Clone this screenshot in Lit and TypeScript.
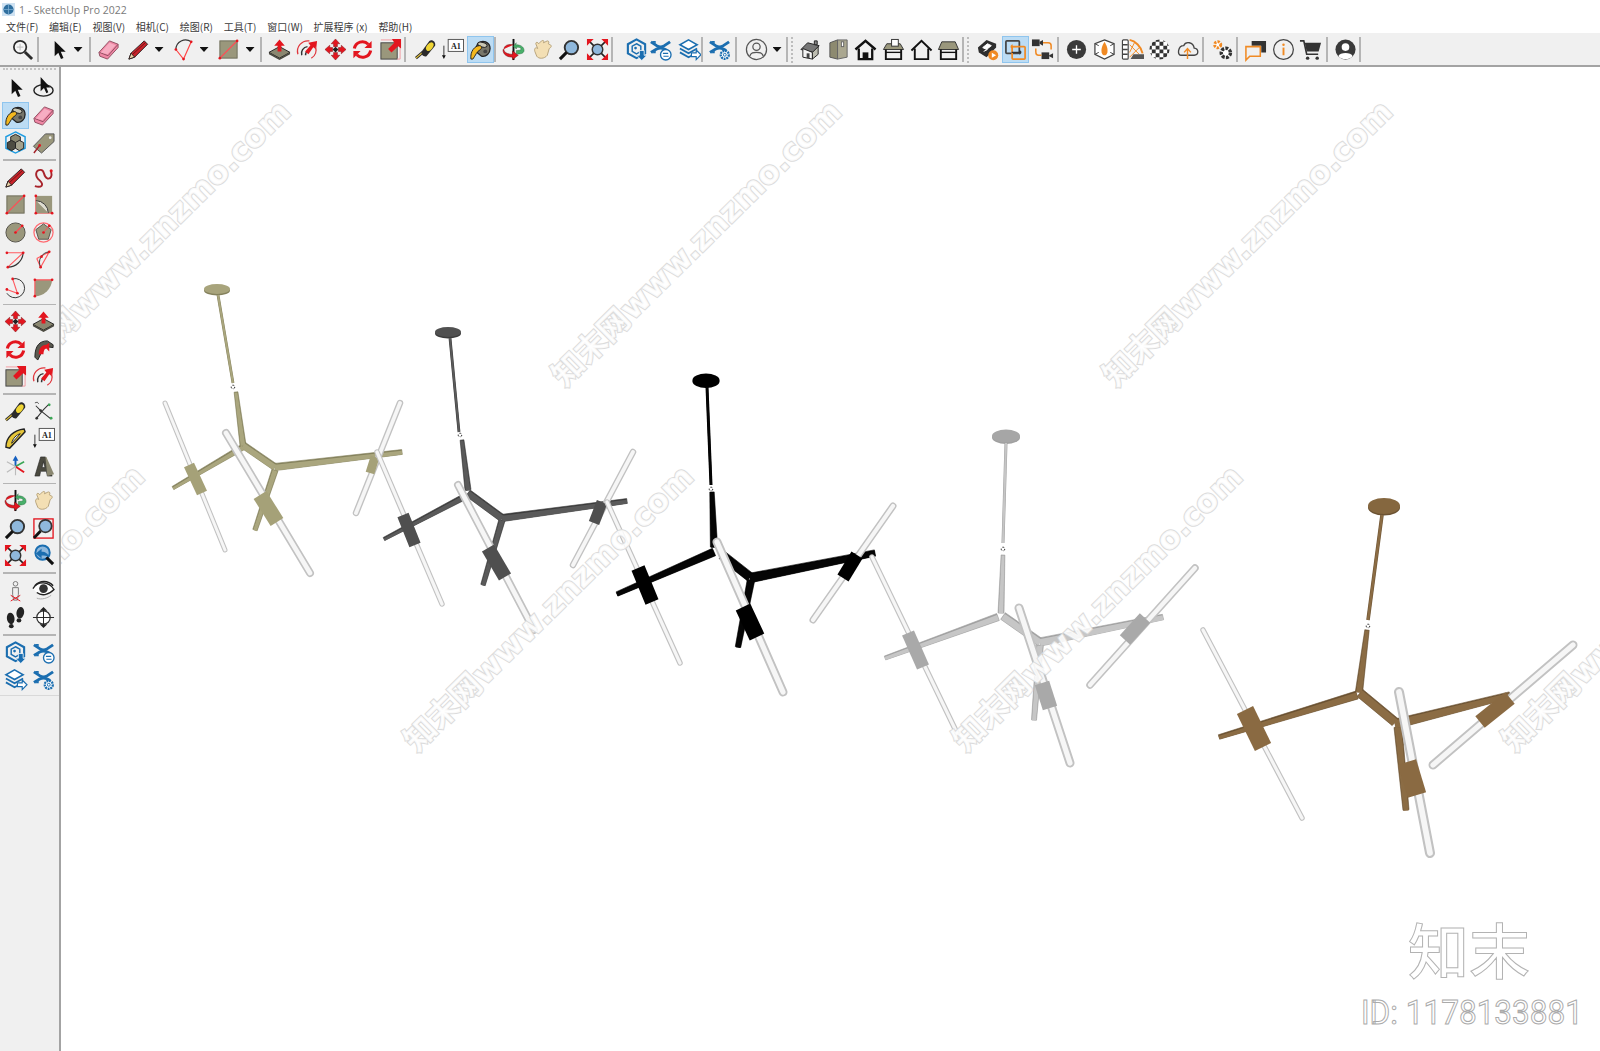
import { LitElement, html, svg, css } from "lit";
import { customElement } from "lit/decorators.js";

const R = "#e3161f", O = "#9a977c", K = "#2b2b2b", B = "#1b6eb0", OR = "#f08a24";
const dot = (x: number, y: number, c = R) => svg`<circle cx=${x} cy=${y} r="1.4" fill=${c}/>`;
const lensBlue = "#8fb8dc";

const xarrows = svg`<path d="M2 4 L8 8 Q12 10.5 16 8 L22 4 M2 15 L8 11.5 Q12 9.5 16 11.5 L19 13" fill="none" stroke=${B} stroke-width="3"/><path d="M3 3 h4 v3z M3 16 h4 v-3z" fill=${B}/>`;

const icons: Record<string, any> = {
  search: svg`<circle cx="9.5" cy="9.5" r="6.5" fill="#f6f6f6" stroke=${K} stroke-width="1.8"/><path d="M14.5 14.5 L22 22" stroke=${K} stroke-width="3"/><path d="M6 9.5h7M9.5 6v7" stroke="#bbb"/>`,
  arrow: svg`<path d="M8 3 V19 L11.8 15.4 L14.6 22 L17.2 20.8 L14.4 14.4 H19.5Z" fill="#111"/>`,
  eraser: svg`<path d="M2 15 L13 3 L22 6.5 L22 10 L11 22 L3 19Z" fill="#ef86a4" stroke="#8f4d60"/><path d="M2.5 15 L11.5 18.5 L22 6.5" fill="none" stroke="#8f4d60"/><path d="M4 15 L13 5 L19.5 7.5 L11 17Z" fill="#f7adc2"/>`,
  pencil: svg`<path d="M2 22 L4.2 15.8 L18 3 L21.5 6.5 L8 20Z" fill="#c9232a" stroke="#2d2020"/><path d="M2 22 L4.2 15.8 L8 20Z" fill="#e9d4a8" stroke="#2d2020"/><path d="M6 17 L19.5 4.5" stroke="#6e1518"/>`,
  freehand: svg`<path d="M3 21 C10 23 13 20 8 15 C2 10 4 4 9 4 C14 4 11 11 16 13 C20 14 21 10 20 6" fill="none" stroke="#a8232b" stroke-width="2"/><circle cx="20" cy="5" r="1.6" fill=${R}/>`,
  rect: svg`<rect x="3" y="3" width="18" height="18" fill=${O} stroke="#6d6b58"/><path d="M3 21 L21 3" stroke="#ff4d55" stroke-width="1.4"/>${dot(3, 21)}${dot(21, 3)}`,
  rotrect: svg`<rect x="4" y="3" width="17" height="18" fill=${O}/><path d="M4 3 V21 H21" fill="none" stroke="#ff4d55"/><path d="M4 8 A13 13 0 0 1 17 21" fill="#dedcd0" stroke="#333"/><path d="M4 8 V21 H17Z" fill=${O}/>${dot(4, 3)}${dot(4, 21)}${dot(21, 21)}`,
  circle: svg`<circle cx="12" cy="12" r="10" fill=${O} stroke="#55534a"/><path d="M12 12 L19 5" stroke="#ff4d55" stroke-width="1.3"/>${dot(12, 12)}${dot(19, 5)}`,
  polygon: svg`<circle cx="12" cy="12" r="10" fill="none" stroke="#ff6a70" stroke-width="1.3"/><path d="M12 3 L20 9 L17 19 L7 19 L4 9Z" fill=${O} stroke="#55534a"/><path d="M12 12 L18 5" stroke="#ff4d55"/>${dot(12, 12)}${dot(18, 5)}`,
  arc: svg`<path d="M3 12 A10 10 0 0 1 19 4" fill="none" stroke="#333" stroke-width="1.2"/><path d="M3 12 L11 22 L19 4" fill="none" stroke="#f44" stroke-width="1.2"/>${dot(3, 12)}${dot(11, 22)}${dot(19, 4)}`,
  arc2: svg`<path d="M3 5 H20 L4 20" fill="none" stroke="#ff5a60" stroke-width="1.2"/><path d="M20 5 A16 16 0 0 1 4 20" fill="none" stroke="#333" stroke-width="1.2"/>${dot(3, 5)}${dot(20, 5)}${dot(4, 20)}`,
  arc3: svg`<path d="M18 4 L9 20 M5 11 L18 4 M5 11 L9 20" fill="none" stroke="#ff5a60" stroke-width="1.2"/><path d="M18 4 A11 11 0 0 0 9 20" fill="none" stroke="#333"/>${dot(18, 4)}${dot(9, 20)}${dot(10, 9)}`,
  arc4: svg`<path d="M9 3 A10 10 0 1 1 3 18" fill="none" stroke="#333"/><path d="M9 3 L14 18 L3 14" fill="none" stroke="#ff5a60" stroke-width="1.2"/>${dot(9, 3)}${dot(14, 18)}${dot(3, 14)}`,
  pie: svg`<path d="M3 4 H21 A18 18 0 0 1 3 21Z" fill=${O}/><path d="M3 4 H21 M3 4 V21" stroke="#ff5a60" stroke-width="1.2"/>${dot(3, 4)}${dot(21, 4)}${dot(3, 21)}`,
  pushpull: svg`<path d="M12 9 L23 15 L12 21 L1 15Z" fill="#8a8770" stroke="#222"/><path d="M1 15 V17 L12 23 L23 17 V15 L12 21Z" fill="#4a493f"/><path d="M12 1.5 L17.5 8 H14 V14 H10 V8 H6.5Z" fill=${R}/>`,
  followme: svg`<path d="M2 17 A11 11 0 0 1 14 3" fill="none" stroke="#e0353c" stroke-width="1.3"/><path d="M6 18 A7 7 0 0 1 12 9" fill="none" stroke="#333" stroke-width="1.5"/><path d="M10 18 A4 4 0 0 1 12 14" fill="none" stroke="#333" stroke-width="1.5"/><path d="M22 3 L21 12 L18 9.6 L13 17 L9.5 14 L15 7.8 L12.8 5Z" fill=${R}/><path d="M20 9 A9 9 0 0 1 16 21" fill="none" stroke="#e0353c" stroke-width="1.2"/>`,
  move: svg`<path d="M12 1 L16.5 6 H14 V9 H10 V6 H7.5Z M12 23 L16.5 18 H14 V15 H10 V18 H7.5Z M1 12 L6 7.5 V10 H9 V14 H6 V16.5Z M23 12 L18 7.5 V10 H15 V14 H18 V16.5Z" fill=${R} stroke="#7a1116" stroke-width=".5"/><path d="M12 9 L15 12 L12 15 L9 12Z" fill="#222"/>`,
  rotate: svg`<path d="M3.5 11 A8.5 8.5 0 0 1 18 6.5" fill="none" stroke=${R} stroke-width="3.2"/><path d="M20.5 13 A8.5 8.5 0 0 1 6 17.5" fill="none" stroke=${R} stroke-width="3.2"/><path d="M21.5 3 V10.5 H14Z M2.5 21 V13.5 H10Z" fill=${R}/>`,
  scale: svg`<rect x="2" y="5" width="17" height="17" fill=${O} stroke="#444"/><path d="M2 2 H22 V22 H19" fill="none" stroke="#f29aa0"/><path d="M23 1 V11 L20 8.5 L13 15 L9.5 11.5 L16 5 L13.5 1Z" fill=${R}/>`,
  offset: svg`<path d="M3 20 C3 8 8 3 16 3 L22 7 L22 10 L14 9 C10 9 9 13 9 17 L6 23Z" fill="#5b5a50" stroke="#222"/><path d="M7 17 C7 11 10 7 15 7 L18 5 V14 L15 11 C13 11 12 14 12 17Z" fill=${R}/>`,
  tape: svg`<path d="M2 21 L9 15" stroke=${K} stroke-width="3"/><path d="M2 21 L9 15" stroke="#f2cf3c" stroke-width="1.2"/><path d="M8 14 L16 3 C19 1 23 4 22 8 L13 19 C10 20 7 17 8 14Z" fill=${K}/><ellipse cx="16.5" cy="9" rx="3" ry="5" transform="rotate(38 16.5 9)" fill="#efd535"/>`,
  dim: svg`<path d="M4 6 L9 11 L20 20 M4 20 L12 10 L18 4" fill="none" stroke="#333" stroke-width="1.1"/><circle cx="9" cy="11" r="1.4" fill="#333"/><circle cx="5" cy="19" r="1.4" fill="#333"/><circle cx="20" cy="19" r="1.4" fill="#3aa655"/><circle cx="18" cy="5" r="1.4" fill="#3aa655"/><path d="M3 3 q3 -2 4 1" fill="none" stroke="#555"/>`,
  protractor: svg`<path d="M2 21 C2 11 10 3 21 2 L22 5 L6 22 Z" fill="#e6c63a" stroke="#222" stroke-width="1.5"/><path d="M8 17 C9 12 13 8 17 7 Z" fill="#fff" stroke="#222"/>`,
  text: svg`<rect x="7.5" y="1.5" width="16" height="12.5" fill="#fff" stroke="#555"/><text x="15.5" y="11" font-size="8.5" font-weight="700" text-anchor="middle" font-family="Liberation Serif, serif" fill="#222">A1</text><path d="M3 8 V19" stroke="#333"/><path d="M1 18 H5 L3 22Z" fill="#111"/>`,
  axes: svg`<path d="M12 12 V3" stroke="#1560c0" stroke-width="2"/><path d="M12 0.5 L15 6 H9Z" fill="#1560c0"/><path d="M12 12 L21 7" stroke="#3aa655" stroke-width="1.6"/><path d="M12 12 L21 18" stroke=${R} stroke-width="2"/><path d="M12 12 L3 7 M12 12 L3 18 M12 12 V21" stroke="#bbb" stroke-width="1.2"/>`,
  text3d: svg`<path d="M3 22 L9 2 H14 L21 22 H16 L15 17 H9 L8 22Z M10.5 13 H13.5 L12 7Z" fill="#4a493f" fill-rule="evenodd" stroke="#222" stroke-width=".6"/><path d="M16 22 L23 20 L15 2 H14Z" fill="#8a8770"/>`,
  orbit: svg`<path d="M12 1 V23" stroke="#111" stroke-width="2"/><path d="M12 7 C6 6 2 8 2 12 C2 15 6 17 11 17 V13.5 L17 18 L11 22.5 V20 C6 20 1 18 1 12" fill=${R} stroke="#6a1014" stroke-width=".5"/><path d="M14 7 C19 7 23 9 23 13 C23 16 19 17 15 16.5 V13 C17 13 20 13 20 11.5 C20 10 18 9.6 15 9.6 V11.5 L12 8.5 L15 5Z" fill="#48b06a" stroke="#1f6a38" stroke-width=".5"/>`,
  orbitSel: svg`<ellipse cx="12" cy="15" rx="10" ry="6" fill="none" stroke="#222" stroke-width="1.5"/><path d="M9 1 V16 L12.5 12.6 L15 18 L17 17 L15 12 H19Z" fill="#111"/>`,
  pan: svg`<path d="M4 14 C3 11 5 9 7 11 L5 6 C5 4 7 4 8 6 L11 3 C13 2 14 3 13 5 L17 3 C19 3 19 5 18 6 L20 7 C22 8 21 10 19 11 L17 18 C14 22 8 22 6 19Z" fill="#f3dfb4" stroke="#b6a27a"/>`,
  zoom: svg`<circle cx="14" cy="10" r="7" fill=${lensBlue} stroke="#333" stroke-width="2"/><path d="M9 15 L2 22" stroke="#111" stroke-width="3.2"/>`,
  zoomwin: svg`<rect x="2" y="2" width="20" height="20" fill="none" stroke=${R} stroke-width="1.4"/><circle cx="14" cy="9.5" r="6.5" fill=${lensBlue} stroke="#333" stroke-width="1.8"/><path d="M9 14.5 L2 22" stroke="#111" stroke-width="3"/>`,
  zoomext: svg`<circle cx="12" cy="12" r="5.5" fill=${lensBlue} stroke="#333" stroke-width="1.5"/><path d="M8 8 L3 3 M16 8 L21 3 M8 16 L3 21 M16 16 L21 21" stroke="#222" stroke-width="1.6"/><path d="M1 1 H8 L1 8Z M23 1 H16 L23 8Z M1 23 H8 L1 16Z M23 23 H16 L23 16Z" fill=${R}/>`,
  prev: svg`<circle cx="11" cy="9" r="7.5" fill=${lensBlue} stroke="#1b6eb0" stroke-width="2"/><path d="M15 14 L22 21" stroke="#111" stroke-width="3.2"/><path d="M4 10 L10 5 V8 C14 8 17 10 18 14 C15 12 13 12 10 12 V15Z" fill=${B}/>`,
  person: svg`<circle cx="12" cy="5" r="2.4" fill="none" stroke="#777"/><path d="M9 9 H15 L15 16 L14 22 H10 L9 16Z" fill="none" stroke="#777"/><path d="M7 17 L17 23 M17 17 L7 23" stroke=${R}/>`,
  eye: svg`<path d="M1 10 C6 2 17 2 23 11 C17 17 10 18 5 14" fill="#fff" stroke="#222" stroke-width="1.4"/><circle cx="12" cy="10" r="4.5" fill="#333"/><path d="M3 7 C8 1 17 1 22 7" fill="none" stroke="#222" stroke-width="1.6"/><path d="M5 20 C10 22 16 20 20 17" fill="none" stroke="#aaa"/>`,
  feet: svg`<ellipse cx="7" cy="13" rx="4" ry="6" transform="rotate(-8 7 13)" fill="#222"/><ellipse cx="7.6" cy="21" rx="2.5" ry="2.2" fill="#222"/><ellipse cx="17" cy="7" rx="4" ry="6" transform="rotate(10 17 7)" fill="#222"/><ellipse cx="15.6" cy="15" rx="2.5" ry="2.2" fill="#222"/>`,
  section: svg`<circle cx="12" cy="12" r="7" fill="#fff" stroke="#333" stroke-width="1.3"/><path d="M1 12 H5 M19 12 H23 M12 2 V22 M5 12 H19" stroke="#222"/><path d="M12 1 L16 5 H8Z M12 23 L16 19 H8Z" fill="#222"/>`,
  paint: svg`<path d="M9 6 C14 1 22 4 22 11 C22 16 18 20 13 19 L6 13Z" fill="#77766a" stroke="#222" stroke-width="1.3"/><ellipse cx="14" cy="7" rx="5" ry="2.4" fill="#c9c7b4" stroke="#222" transform="rotate(15 14 7)"/><path d="M2 22 C1 14 6 8 11 8 C13 8 14 10 12 12 C8 14 7 18 4 22Z" fill="#f4b81e" stroke="#222"/><circle cx="17" cy="14" r="2" fill="#444"/>`,
  component: svg`<path d="M12 1 L22 6 V18 L12 23 L2 18 V6Z" fill="none" stroke="#1d9be0" stroke-width="1.5"/><path d="M7 6 L12 3.5 L17 6 V11 L12 13.5 L7 11Z" fill="#8a8770" stroke="#222"/><path d="M3.5 12 L8 9.8 L12 12 V18 L8 20.5 L3.5 18Z" fill="#4d4c42" stroke="#222"/><path d="M12 12 L16 9.8 L20.5 12 V18 L16 20.5 L12 18Z" fill="#a3a18c" stroke="#222"/>`,
  tag: svg`<path d="M1.5 16 L14 3 L23 3 L23 11 L10 23 Z" fill=${O} stroke="#555"/><circle cx="19" cy="7" r="1.4" fill="#eee"/><path d="M2 23 L8 15" stroke="#a3232a" stroke-width="1.6"/><circle cx="8" cy="15" r="1.4" fill=${R}/>`,
  whDown: svg`<path d="M12 1.5 L21 6.5 V16 L12 21 L3 16 V6.5Z" fill="none" stroke=${B} stroke-width="2.2"/><path d="M12 6 L16.5 8.5 V14 L12 16.5 L7.5 14 V8.5Z" fill="none" stroke=${B} stroke-width="1.5"/><circle cx="11" cy="10.5" r="1.4" fill=${B}/><path d="M15 13 H20 V18 H23 L17.5 23.5 L12 18 H15Z" fill=${B} stroke="#fff" stroke-width=".8"/>`,
  xsync: svg`${xarrows}<circle cx="17.5" cy="17.5" r="5.5" fill="#fff" stroke=${B} stroke-width="1.4"/><path d="M14.5 16 H20 M20.5 19 H15" stroke=${B} stroke-width="1.2"/>`,
  xgear: svg`${xarrows}<circle cx="17.5" cy="17.5" r="4.2" fill="#fff" stroke=${B} stroke-width="2.4" stroke-dasharray="2 .8"/><circle cx="17.5" cy="17.5" r="1.5" fill="#fff" stroke=${B}/>`,
  layersUp: svg`<path d="M11 2 L20 7 L11 12 L2 7Z" fill="#fff" stroke=${B} stroke-width="1.6"/><path d="M2 11 L11 16 L20 11 M2 15 L11 20 L14 18.5" fill="none" stroke=${B} stroke-width="1.8"/><path d="M14 15.5 H19 V12.5 L24 17.5 L19 22.5 V19.5 H14Z" fill="#fff" stroke=${B} stroke-width="1.2"/>`,
  user: svg`<circle cx="12" cy="12" r="10.5" fill="none" stroke="#555" stroke-width="1.3"/><circle cx="12" cy="9.2" r="3.8" fill="none" stroke="#555" stroke-width="1.3"/><path d="M5 19 C6 15 9 15 12 15 C15 15 18 15 19 19" fill="none" stroke="#555" stroke-width="1.3"/>`,
  house3d: svg`<path d="M2 12 L9 5 L21 8 L15 15Z" fill="#777"  stroke="#222"/><path d="M4 11 V20 L14 22 V15 Z" fill="#f4f4f4" stroke="#222"/><path d="M14 15 L20 9 V17 L14 22Z" fill="#bcbcb0" stroke="#222"/><path d="M16 3 h3 v4 h-3z" fill="#888" stroke="#222"/><rect x="8" y="16" width="3" height="5" fill="#444"/>`,
  book: svg`<path d="M3 5 L11 2 V22 L3 20Z" fill="#8d8a70" stroke="#555"/><path d="M11 2 H21 V20 L11 22Z" fill="#aaa790" stroke="#666"/><rect x="15" y="4" width="2.4" height="5" fill="#fff" stroke="#666"/>`,
  home: svg`<path d="M1.5 12 L12 3 L22.5 12" fill="none" stroke="#111" stroke-width="2.6"/><path d="M5 11 V22 H19 V11" fill="none" stroke="#111" stroke-width="2.4"/><path d="M9 22 V15 H15 V22Z" fill="#111"/>`,
  houseDoc: svg`<path d="M1.5 12 L5 6 H19 L22.5 12Z" fill=${O} stroke="#333"/><rect x="10" y="1.5" width="7" height="7" fill="#fff" stroke="#333"/><path d="M4 12 V22 H20 V12" fill="none" stroke="#111" stroke-width="2"/><path d="M4 15 H20" stroke="#111" stroke-width="1.4"/>`,
  houseLine: svg`<path d="M1.5 13 L12 3 L22.5 13" fill="none" stroke="#111" stroke-width="2"/><path d="M5 11 V22 H19 V11" fill="none" stroke="#111" stroke-width="2"/>`,
  houseRoof: svg`<path d="M1.5 12 L5 4 H19 L22.5 12Z" fill=${O} stroke="#333"/><path d="M4 12 V22 H20 V12" fill="none" stroke="#111" stroke-width="2"/><path d="M4 15 H20" stroke="#111" stroke-width="1.4"/>`,
  tagPlay: svg`<path d="M2 10 L11 2 L21 6 V10 L11 20 L3 15Z" fill="#2e2e2e"/><path d="M7 10 L12 6 L16 8 L11 12Z M8 14 L12 12" fill="#fff" stroke="#fff"/><circle cx="18" cy="18" r="5.2" fill=${OR}/><path d="M16.5 15.5 L21 18 L16.5 20.5Z" fill="#fff"/>`,
  swapWin: svg`<rect x="2" y="3" width="14" height="13" rx="1" fill="none" stroke="#444" stroke-width="1.8"/><rect x="8.5" y="9" width="13.5" height="13" rx="1" fill="none" stroke=${OR} stroke-width="1.8"/><path d="M7 9 H13 M7 9 l2 -2 M7 9 l2 2" fill="none" stroke=${OR} stroke-width="1.3"/><path d="M8 15 H18 M18 15 l-2 -2 M18 15 l-2 2" fill="none" stroke="#333" stroke-width="1.3"/>`,
  camSwap: svg`<rect x="1" y="1.5" width="8" height="7" fill="#333"/><path d="M9 4 L12.5 2 V8 L9 6Z" fill="#333"/><rect x="11" y="15" width="8" height="7" fill="#333"/><path d="M19 18 L23 16 V21 L19 19Z" fill="#333"/><path d="M12.5 5 H18 Q21 5 21 8 V12 M5 11 V14 Q5 18 8 18 H11" fill="none" stroke=${OR} stroke-width="1.6"/>`,
  plus: svg`<circle cx="12" cy="12" r="10" fill="#3a3a3a"/><path d="M12 7.5 V16.5 M7.5 12 H16.5" stroke="#fff" stroke-width="1.4"/>`,
  shield: svg`<path d="M12 2 L22 6 V17 L12 22 L2 17 V6Z" fill="#fff" stroke="#444" stroke-width="1.3"/><path d="M2 6 L6 8 M22 6 L18 8 M2 17 L6 15 M22 17 L18 15" stroke="#444"/><path d="M12 4 C9 9 8.5 12 9 15 C10 19 14 19 15 15 C15.5 12 15 9 12 4Z" fill=${OR}/>`,
  fan: svg`<rect x="1.5" y="2" width="6" height="20" rx="1" fill="#fff" stroke="#444" stroke-width="1.2"/><path d="M2 7 H7 M2 12 H7 M2 17 H7" stroke="#444" stroke-width="1.5"/><path d="M9 2 C15 3 21 9 22.5 16" fill="none" stroke=${OR} stroke-width="2"/><path d="M9 7 L19 17 M14 5 L9 15 M19 10 L9 20" stroke=${OR}/><path d="M10 22 L13 17 H24 V22Z" fill="#555"/>`,
  checker: svg`<defs><clipPath id="cb"><circle cx="12" cy="12" r="10.5"/></clipPath></defs><g clip-path="url(#cb)"><rect width="24" height="24" fill="#fff"/><path d="M0 0h4v4h-4z M8 0h4v4h-4z M16 0h4v4h-4z M4 4h4v4h-4z M12 4h4v4h-4z M20 4h4v4h-4z M0 8h4v4h-4z M8 8h4v4h-4z M16 8h4v4h-4z M4 12h4v4h-4z M12 12h4v4h-4z M20 12h4v4h-4z M0 16h4v4h-4z M8 16h4v4h-4z M16 16h4v4h-4z M4 20h4v4h-4z M12 20h4v4h-4z" fill="#333"/></g>`,
  cloud: svg`<path d="M5 18 H19 C24 18 24 11 19 10.5 C18 4 10 3 8 8 C2 8 1 18 5 18Z" fill="none" stroke="#444" stroke-width="1.4"/><path d="M12 22 V12 M8.5 15 L12 11 L15.5 15" fill="none" stroke=${OR} stroke-width="1.5"/>`,
  gears: svg`<circle cx="7" cy="7" r="3.2" fill="#fff" stroke=${OR} stroke-width="3" stroke-dasharray="2.4 1.2"/><circle cx="15.5" cy="15.5" r="4.8" fill="#fff" stroke="#333" stroke-width="3.6" stroke-dasharray="3 1.3"/>`,
  chat: svg`<path d="M8 3 H23 V15 H18 V8 H8Z" fill="#333"/><path d="M2 9 H17 V19 H6 L2 23Z" fill="none" stroke=${OR} stroke-width="1.6"/>`,
  info: svg`<circle cx="12" cy="12" r="10.3" fill="none" stroke="#444" stroke-width="1.3"/><circle cx="12" cy="7" r="1.3" fill=${OR}/><path d="M12 10 V18" stroke=${OR} stroke-width="2"/>`,
  cart: svg`<path d="M1 3 H5 L8 17 H20" fill="none" stroke="#333" stroke-width="1.7"/><path d="M6 5 H23 L20.5 14 H8Z" fill="#333"/><circle cx="9" cy="21" r="1.8" fill="#333"/><circle cx="19" cy="21" r="1.8" fill="#333"/>`,
  account: svg`<circle cx="12" cy="12" r="10.5" fill="#3a3a3a"/><circle cx="12" cy="9.5" r="4" fill="#fff"/><path d="M4.5 19 C6 14.5 18 14.5 19.5 19 C16 23 8 23 4.5 19Z" fill="#fff"/>`,
};

const toolbar: [string, number, string?][] = [
  ["search", 22], ["sep", 38], ["arrow", 58], ["dd", 78], ["sep", 90], ["eraser", 108], ["pencil", 138], ["dd", 159], ["arc", 184], ["dd", 204], ["rect", 228], ["dd", 250], ["sep", 261],
  ["pushpull", 279], ["followme", 307], ["move", 335], ["rotate", 362], ["scale", 390], ["sep", 405], ["tape", 425], ["text", 452], ["paint", 480, "sel"], ["sep", 495],
  ["orbit", 513], ["pan", 542], ["zoom", 569], ["zoomext", 597], ["sep", 612], ["whDown", 636], ["xsync", 660], ["layersUp", 689], ["sep", 702], ["xgear", 719], ["sep", 736],
  ["user", 756], ["dd", 777], ["sep", 787], ["grip", 792], ["house3d", 810], ["book", 838], ["home", 865], ["houseDoc", 893], ["houseLine", 921], ["houseRoof", 948], ["sep", 963], ["grip", 968],
  ["tagPlay", 987], ["swapWin", 1015, "sel"], ["camSwap", 1042], ["sep", 1058], ["plus", 1076], ["shield", 1104], ["fan", 1132], ["checker", 1159], ["cloud", 1187], ["sep", 1203],
  ["gears", 1222], ["sep", 1237], ["chat", 1255], ["info", 1283], ["cart", 1310], ["sep", 1327], ["account", 1345], ["sep", 1360],
];

const palette: string[][][] = [
  [["arrow", "orbitSel"], ["paint*", "eraser"], ["component", "tag"]],
  [["pencil", "freehand"], ["rect", "rotrect"], ["circle", "polygon"], ["arc2", "arc3"], ["arc4", "pie"]],
  [["move", "pushpull"], ["rotate", "offset"], ["scale", "followme"]],
  [["tape", "dim"], ["protractor", "text"], ["axes", "text3d"]],
  [["orbit", "pan"], ["zoom", "zoomwin"], ["zoomext", "prev"]],
  [["person", "eye"], ["feet", "section"]],
  [["whDown", "xsync"], ["layersUp", "xgear"]],
];

const menus = ["文件(F)", "编辑(E)", "视图(V)", "相机(C)", "绘图(R)", "工具(T)", "窗口(W)", "扩展程序 (x)", "帮助(H)"];

type L = number[];
interface Lamp { c: string; dark: string; hold: string; discC: string; disc: L; rod: L; hook: L; arms: L[]; rods: L[]; holders: L[]; }

const lamps: Lamp[] = [
  { c: "#aaa67e", dark: "#84815c", hold: "#a5a178", discC: "#a8a47c", disc: [217, 289, 13, 5], rod: [218, 295, 233, 383, 2.8], hook: [233, 387],
    arms: [[236, 392, 243, 445, 5], [243, 447, 173, 488, 4.5], [243, 445, 275, 467, 6], [275, 467, 402, 452, 6], [275, 470, 255, 530, 5.5]],
    rods: [[165, 403, 225, 550, 5], [226, 433, 310, 573, 8], [400, 403, 356, 513, 6.5]],
    holders: [[189, 465, 202, 493, 11], [260, 495, 277, 522, 15], [375, 457, 370, 473, 9]] },
  { c: "#5a5a5a", dark: "#3c3c3c", hold: "#4f4f4f", discC: "#505050", disc: [448, 332, 13, 5], rod: [450, 338, 459, 432, 2.8], hook: [460, 435],
    arms: [[462, 440, 468, 490, 5], [464, 497, 384, 539, 4.5], [468, 493, 502, 518, 6.5], [502, 518, 627, 501, 6], [502, 520, 483, 585, 5.5]],
    rods: [[377, 452, 442, 604, 5.5], [458, 485, 534, 630, 8], [633, 452, 573, 565, 6.5]],
    holders: [[403, 515, 415, 545, 12], [488, 548, 505, 577, 14], [602, 502, 594, 523, 11]] },
  { c: "#050505", dark: "#000", hold: "#000", discC: "#000", disc: [706, 380, 13.5, 6.5], rod: [707, 387, 711, 485, 3], hook: [711, 489],
    arms: [[712, 492, 714, 547, 6], [714, 552, 617, 594, 6], [722, 555, 750, 577, 8], [750, 578, 875, 553, 8], [751, 580, 738, 647, 6.5]],
    rods: [[607, 502, 680, 663, 5.5], [717, 542, 783, 692, 9], [893, 506, 813, 620, 7]],
    holders: [[638, 568, 652, 602, 14], [743, 607, 757, 637, 16], [857, 555, 843, 578, 13]] },
  { c: "#c6c6c6", dark: "#a0a0a0", hold: "#a9a9a9", discC: "#a6a6a6", disc: [1006, 436, 14, 6.5], rod: [1006, 443, 1003, 543, 3], hook: [1003, 549],
    arms: [[1003, 555, 1001, 613, 5], [998, 617, 885, 658, 5.5], [1003, 616, 1040, 642, 7], [1040, 642, 1163, 617, 7], [1040, 645, 1034, 720, 6]],
    rods: [[872, 557, 957, 733, 5.5], [1019, 608, 1070, 763, 9], [1195, 568, 1090, 685, 7.5]],
    holders: [[908, 633, 923, 667, 13], [1042, 683, 1050, 708, 15], [1145, 618, 1125, 640, 14]] },
  { c: "#8b6c44", dark: "#6b5232", hold: "#8a6a42", discC: "#85673f", disc: [1384, 506, 16, 8], rod: [1382, 515, 1368, 620, 3.5], hook: [1368, 626],
    arms: [[1367, 630, 1359, 692, 6], [1357, 695, 1219, 737, 6], [1360, 693, 1395, 722, 8], [1395, 724, 1510, 695, 8], [1398, 727, 1406, 810, 7]],
    rods: [[1203, 630, 1302, 818, 5.5], [1399, 692, 1430, 853, 10], [1573, 645, 1433, 765, 9]],
    holders: [[1245, 710, 1263, 747, 18], [1407, 762, 1417, 795, 19], [1510, 698, 1480, 722, 15]] },
];

const line = (a: L, color: string, w: number, cap = "butt") =>
  svg`<line x1=${a[0]} y1=${a[1]} x2=${a[2]} y2=${a[3]} stroke=${color} stroke-width=${w} stroke-linecap=${cap}/>`;

/* width factors at the two ends of stem, left arm, link, right arm and drop arm */
const taper = [[0.75, 1.2], [1.35, 0.75], [1.15, 1.15], [1.2, 0.8], [1.15, 0.85]];

function quad(a: L, w1: number, w2: number) {
  const dx = a[2] - a[0], dy = a[3] - a[1], n = Math.hypot(dx, dy), ox = -dy / n / 2, oy = dx / n / 2;
  return [
    [a[0] + ox * w1, a[1] + oy * w1], [a[2] + ox * w2, a[3] + oy * w2],
    [a[2] - ox * w2, a[3] - oy * w2], [a[0] - ox * w1, a[1] - oy * w1],
  ].map((p) => p.map((v) => v.toFixed(1)).join(",")).join(" ");
}

function drawLamp(l: Lamp) {
  return svg`<g>
    <ellipse cx=${l.disc[0]} cy=${l.disc[1] + 1.5} rx=${l.disc[2]} ry=${l.disc[3]} fill=${l.dark}/>
    ${line(l.rod, l.dark, l.rod[4])}
    ${line(l.rod, l.c, l.rod[4] * 0.7)}
    <ellipse cx=${l.disc[0]} cy=${l.disc[1]} rx=${l.disc[2]} ry=${l.disc[3]} fill=${l.discC}/>
    <circle cx=${l.hook[0]} cy=${l.hook[1]} r="1.8" fill="#fff" stroke="#333" stroke-width="1" stroke-dasharray="2 1.5"/>
    ${l.arms.map((a, i) => svg`<polygon points=${quad(a, a[4] * taper[i][0], a[4] * taper[i][1])} fill=${l.dark} stroke=${l.dark} stroke-width="0.6" stroke-linejoin="round"/>`)}
    ${l.arms.map((a, i) => svg`<polygon points=${quad([a[0], a[1] + 0.6, a[2], a[3] + 0.6], (a[4] - 1.2) * taper[i][0], (a[4] - 1.2) * taper[i][1])} fill=${l.c}/>`)}
    ${l.rods.map((a) => svg`${line(a, "#c2c2c2", a[4], "round")}${line(a, "#f6f6f6", a[4] * 0.58, "round")}`)}
    ${l.holders.map((a) => line(a, l.hold, a[4]))}
  </g>`;
}

const marks: [number, number][] = [[14, 388], [565, 388], [1116, 388], [-132, 753], [417, 753], [966, 753], [1515, 753]];

@customElement("app-root")
export class AppRoot extends LitElement {
  static styles = css`
    :host { display: flex; flex-direction: column; width: 1600px; height: 1051px; background: #fff; overflow: hidden; font-family: "Noto Sans CJK SC", "Liberation Sans", sans-serif; }
    .title { height: 19px; display: flex; align-items: center; gap: 4px; padding-left: 2px; background: #fff; }
    .title svg { width: 13px; height: 13px; flex: none; }
    .title span { font: 10.5px "Open Sans", sans-serif; color: #7a7a7a; }
    .menu { height: 14px; display: flex; align-items: center; gap: 10.8px; padding-left: 6px; font-size: 10px; color: #3a3a3a; background: #fff; white-space: pre; }
    .bar { height: 31px; padding-top: 1px; flex: none; display: flex; align-items: center; background: #f0f0f0; border-bottom: 2px solid #a3a3a3; }
    .cell { display: flex; align-items: center; justify-content: center; height: 30px; flex: none; }
    .bar .cell { justify-content: flex-end; }
    .btn { width: 27px; height: 27px; display: flex; align-items: center; justify-content: center; box-sizing: border-box; flex: none; }
    .bar .btn { margin-right: -13.5px; }
    .btn.sel { background: #bcdcf4; border: 1px solid #8fc5ee; }
    .ic { width: 23px; height: 23px; display: block; overflow: visible; flex: none; }
    .dd { width: 9px; height: 5px; background: #111; clip-path: polygon(0 0, 100% 0, 50% 100%); flex: none; margin-right: -4.5px; }
    .sep { width: 2px; height: 25px; background: #b5b5b5; flex: none; margin-right: -1px; }
    .grip { width: 1px; height: 26px; border-left: 2px dotted #bdbdbd; flex: none; margin-right: -1.5px; }
    .main { flex: 1; display: flex; min-height: 0; }
    .side { width: 59px; flex: none; background: #f0f0f0; border-right: 2px solid #a3a3a3; display: flex; flex-direction: column; padding-top: 1px; }
    .pgrip { height: 4px; margin: 0 3px; border-top: 2px dotted #c4c4c4; }
    .group { display: grid; grid-template-columns: 27.5px 27.5px; grid-auto-rows: 27.5px; padding-left: 2px; }
    .group .cell { height: 27.5px; }
    .psep { height: 1.5px; margin: 2.75px 3px; background: #b5b5b5; }
    .end { margin-top: 1px; border-top: 1px solid #d9d9d9; flex: 1; }
    .canvas { flex: 1; position: relative; background: #fff; min-width: 0; }
    .canvas svg { position: absolute; inset: 0; width: 100%; height: 100%; display: block; }
    .wm { font-family: "DejaVu Sans", "Noto Sans CJK SC", sans-serif; font-size: 31px; font-weight: 700; fill: #fff; fill-opacity: .85; stroke: #dcdcdc; stroke-width: 2; paint-order: stroke; }
    .lg { font-family: "Noto Sans CJK SC", sans-serif; font-size: 60px; font-weight: 500; fill: #fff; stroke: #b3b3b3; stroke-width: 1; }
    .id { font-family: Roboto, sans-serif; font-size: 34px; fill: #fff; stroke: #aaa; stroke-width: 1; }
  `;

  private icon(name: string) {
    return html`<svg class="ic" viewBox="0 0 24 24">${icons[name]}</svg>`;
  }

  private barItems() {
    return toolbar.map(([n, c, sel], i) => {
      const inner = n === "sep" ? html`<div class="sep"></div>` : n === "grip" ? html`<div class="grip"></div>` : n === "dd" ? html`<div class="dd"></div>` : html`<div class="btn ${sel ?? ""}">${this.icon(n)}</div>`;
      return html`<div class="cell" style="width:${c - (i ? toolbar[i - 1][1] : 0)}px">${inner}</div>`;
    });
  }

  render() {
    return html`
      <div class="title">
        <svg viewBox="0 0 14 14"><rect width="14" height="14" fill="#cfe2f2"/><circle cx="7" cy="7" r="5.5" fill="#2f6f9f"/><path d="M2 7h10M7 2v10" stroke="#7fb0d4" stroke-width=".8"/></svg>
        <span>1 - SketchUp Pro 2022</span>
      </div>
      <div class="menu">${menus.map((m) => html`<span>${m}</span>`)}</div>
      <div class="bar">${this.barItems()}</div>
      <div class="main">
        <div class="side">
          <div class="pgrip"></div>
          ${palette.map((g, i) => html`
            ${i ? html`<div class="psep"></div>` : ""}
            <div class="group">${g.flat().map((n) => {
              const sel = n.endsWith("*");
              return html`<div class="cell"><div class="btn ${sel ? "sel" : ""}">${this.icon(n.replace("*", ""))}</div></div>`;
            })}</div>`)}
          <div class="end"></div>
        </div>
        <div class="canvas">
          <svg viewBox="61 67 1539 984" preserveAspectRatio="xMinYMin slice">
            ${lamps.map(drawLamp)}
            ${marks.map(([x, y]) => svg`<text class="wm" transform="translate(${x} ${y}) rotate(-44.6)" textLength="391" lengthAdjust="spacingAndGlyphs">知末网www.znzmo.com</text>`)}
            <text class="lg" x="1408" y="974" textLength="122" lengthAdjust="spacingAndGlyphs">知末</text>
            <text class="id" x="1361" y="1024" textLength="222" lengthAdjust="spacingAndGlyphs">ID: 1178133881</text>
          </svg>
        </div>
      </div>
    `;
  }
}
